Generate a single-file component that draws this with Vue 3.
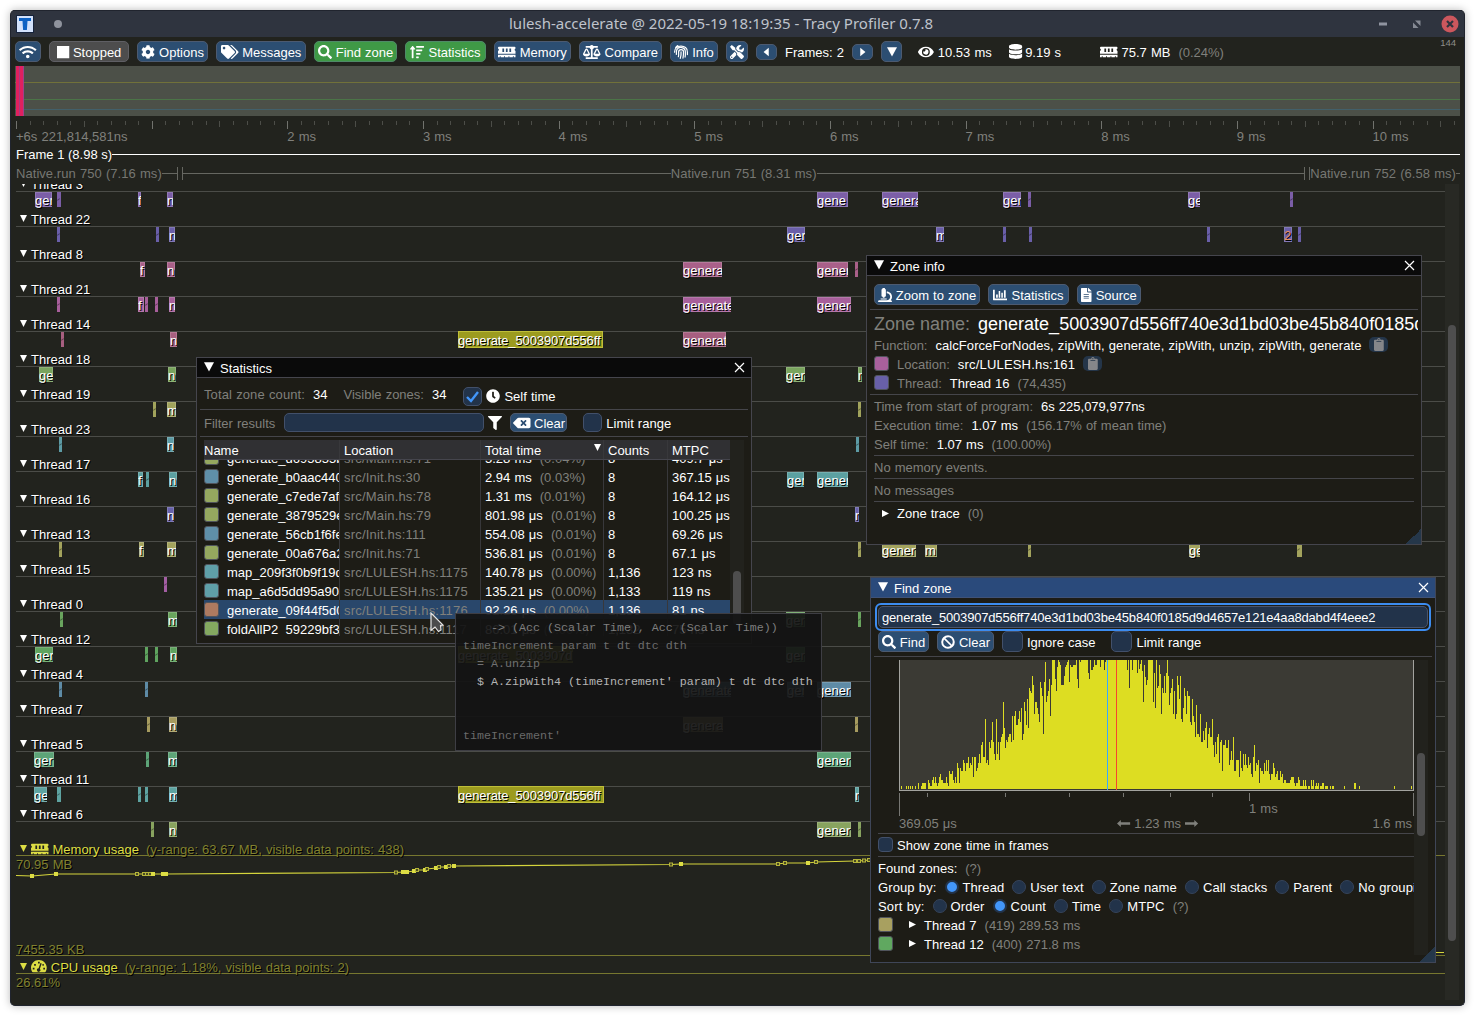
<script setup>
import { h } from 'vue'

const icons = {
  wifi: [640, 'M634.91 154.88C457.74-8.99 182.19-8.93 5.09 154.88c-6.66 6.16-6.79 16.59-.35 22.98l34.24 33.97c6.14 6.1 16.02 6.23 22.4.38 145.92-133.68 371.3-133.71 517.25 0 6.38 5.85 16.26 5.71 22.4-.38l34.24-33.97c6.43-6.39 6.3-16.82-.36-22.98zM320 352c-35.35 0-64 28.65-64 64s28.65 64 64 64 64-28.65 64-64-28.65-64-64-64zm202.67-83.59c-115.26-101.93-290.21-101.82-405.34 0-6.9 6.1-7.12 16.69-.57 23.15l34.44 33.99c6 5.92 15.66 6.32 22.05.8 83.95-72.57 209.74-72.41 293.49 0 6.39 5.52 16.05 5.13 22.05-.8l34.44-33.99c6.56-6.46 6.33-17.06-.56-23.15z'],
  stop: [448, 'M0 32h448v448H0z'],
  cog: [512, 'M487.4 315.7l-42.6-24.6c4.3-23.2 4.3-47 0-70.2l42.6-24.6c4.9-2.8 7.1-8.6 5.5-14-11.1-35.6-30-67.8-54.7-94.6-3.8-4.1-10-5.1-14.8-2.3L380.8 110c-17.9-15.4-38.5-27.3-60.8-35.1V25.8c0-5.6-3.9-10.5-9.4-11.7-36.7-8.2-74.3-7.8-109.2 0-5.5 1.2-9.4 6.1-9.4 11.7V75c-22.2 7.9-42.8 19.8-60.8 35.1L88.7 85.5c-4.9-2.8-11-1.9-14.8 2.3-24.7 26.7-43.6 58.9-54.7 94.6-1.7 5.4.6 11.2 5.5 14L67.3 221c-4.3 23.2-4.3 47 0 70.2l-42.6 24.6c-4.9 2.8-7.1 8.6-5.5 14 11.1 35.6 30 67.8 54.7 94.6 3.8 4.1 10 5.1 14.8 2.3l42.6-24.6c17.9 15.4 38.5 27.3 60.8 35.1v49.2c0 5.6 3.9 10.5 9.4 11.7 36.7 8.2 74.3 7.8 109.2 0 5.5-1.2 9.4-6.1 9.4-11.7v-49.2c22.2-7.9 42.8-19.8 60.8-35.1l42.6 24.6c4.9 2.8 11 1.9 14.8-2.3 24.7-26.7 43.6-58.9 54.7-94.6 1.5-5.5-.7-11.3-5.6-14.1zM256 336c-44.1 0-80-35.9-80-80s35.9-80 80-80 80 35.9 80 80-35.9 80-80 80z'],
  tags: [640, 'M497.941 225.941L286.059 14.059A48 48 0 0 0 252.118 0H48C21.49 0 0 21.49 0 48v204.118a48 48 0 0 0 14.059 33.941l211.882 211.882c18.744 18.745 49.136 18.746 67.882 0l204.118-204.118c18.745-18.745 18.745-49.137 0-67.882zM112 160c-26.51 0-48-21.49-48-48s21.49-48 48-48 48 21.49 48 48-21.49 48-48 48zm513.941 133.823L421.823 497.941c-18.745 18.745-49.137 18.745-67.882 0l-.36-.36L527.64 323.522c16.999-16.999 26.36-39.6 26.36-63.64s-9.362-46.641-26.36-63.64L331.397 0h48.721a48 48 0 0 1 33.941 14.059l211.882 211.882c18.745 18.745 18.745 49.137 0 67.882z'],
  search: [512, 'M505 442.7L405.3 343c-4.5-4.5-10.6-7-17-7H372c27.6-35.3 44-79.7 44-128C416 93.1 322.9 0 208 0S0 93.1 0 208s93.1 208 208 208c48.3 0 92.7-16.4 128-44v16.3c0 6.4 2.5 12.5 7 17l99.7 99.7c9.4 9.4 24.6 9.4 33.9 0l28.3-28.3c9.4-9.4 9.4-24.6.1-34zM208 336c-70.7 0-128-57.2-128-128 0-70.7 57.2-128 128-128 70.7 0 128 57.2 128 128 0 70.7-57.2 128-128 128z'],
  sort: [512, 'M16 160h48v304q0 16 16 16h32q16 0 16-16V160h48c14 0 21-17 11-27L107 37q-11-10-22 0L5 133c-10 10-3 27 11 27zM240 32h256q16 0 16 16v32q0 16-16 16H240q-16 0-16-16V48q0-16 16-16zM240 160h192q16 0 16 16v32q0 16-16 16H240q-16 0-16-16v-32q0-16 16-16zM240 288h128q16 0 16 16v32q0 16-16 16H240q-16 0-16-16v-32q0-16 16-16zM240 416h64q16 0 16 16v32q0 16-16 16h-64q-16 0-16-16v-32q0-16 16-16z'],
  memory: [640, 'M640 130.94V96c0-17.67-14.33-32-32-32H32C14.33 64 0 78.33 0 96v34.94c18.6 6.61 32 24.19 32 45.06s-13.4 38.45-32 45.06V320h640v-98.94c-18.6-6.61-32-24.19-32-45.06s13.4-38.45 32-45.06zM224 256h-64V128h64v128zm128 0h-64V128h64v128zm128 0h-64V128h64v128zM0 448h64v-26.67c0-8.84 7.16-16 16-16s16 7.16 16 16V448h128v-26.67c0-8.84 7.16-16 16-16s16 7.16 16 16V448h128v-26.67c0-8.84 7.16-16 16-16s16 7.16 16 16V448h128v-26.67c0-8.84 7.16-16 16-16s16 7.16 16 16V448h64v-96H0v96z'],
  scale: [640, 'M256 336h-.02c0-16.18 1.34-8.73-85.05-181.51-17.65-35.29-68.19-35.36-85.87 0C-2.06 328.75.02 320.33.02 336H0c0 44.18 57.31 80 128 80s128-35.82 128-80zM128 176l72 144H56l72-144zm511.98 160c0-16.18 1.34-8.73-85.05-181.51-17.65-35.29-68.19-35.36-85.87 0-87.12 174.26-85.04 165.84-85.04 181.51H384c0 44.18 57.31 80 128 80s128-35.82 128-80h-.02zM440 320l72-144 72 144H440zm88 128H352V153.25c23.51-10.29 41.16-31.48 46.39-57.25H528c8.84 0 16-7.16 16-16V48c0-8.84-7.16-16-16-16H383.64C369.04 12.68 346.09 0 320 0s-49.04 12.68-63.64 32H112c-8.84 0-16 7.16-16 16v32c0 8.84 7.16 16 16 16h129.61c5.23 25.76 22.87 46.96 46.39 57.25V448H112c-8.84 0-16 7.16-16 16v32c0 8.84 7.16 16 16 16h416c8.84 0 16-7.16 16-16v-32c0-8.84-7.16-16-16-16z'],
  finger: [512, 'M20 260c-18-290 490-300 470 0v90M85 340c10-60-10-110 20-170 70-120 310-110 310 80 4 60 2 130-10 190M160 430c20-70 8-120 8-180 8-110 178-110 180 0 2 90-4 150-20 230M258 250c6 90-4 170-28 240M60 90c20-30 50-55 80-70', 'stroke'],
  tools: [512, 'M501.1 395.7L384 278.6c-23.1-23.1-57.6-27.6-85.4-13.9L192 158.1V96L64 0 0 64l96 128h62.1l106.6 106.6c-13.6 27.8-9.2 62.3 13.9 85.4l117.1 117.1c14.6 14.6 38.2 14.6 52.7 0l52.7-52.7c14.5-14.6 14.5-38.2 0-52.7zM331.7 225c28.3 0 54.9 11 74.9 31l19.4 19.4c15.8-6.9 30.8-16.5 43.8-29.5 37.1-37.1 49.7-89.3 37.9-136.7-2.2-9-13.5-12.1-20.1-5.5l-74.4 74.4-67.9-11.3L334 98.9l74.4-74.4c6.6-6.6 3.4-17.9-5.7-20.2-47.4-11.7-99.6.9-136.6 37.9-28.5 28.5-41.9 66.1-41.2 103.6l82.1 82.1c8.1-1.9 16.5-2.9 24.7-2.9zm-103.9 82l-56.7-56.7L18.7 402.8c-25 25-25 65.5 0 90.5s65.5 25 90.5 0l123.6-123.6c-7.6-19.9-9.9-41.6-5-62.7zM64 472c-13.2 0-24-10.8-24-24 0-13.3 10.7-24 24-24s24 10.7 24 24c0 13.2-10.7 24-24 24z'],
  left: [256, 'M210 100v312L20 256z'],
  right: [256, 'M46 100v312l190-156z'],
  down: [320, 'M0 100h320L160 400z'],
  eye: [576, 'M572.52 241.4C518.29 135.59 410.93 64 288 64S57.68 135.64 3.48 241.41a32.35 32.35 0 0 0 0 29.19C57.71 376.41 165.07 448 288 448s230.32-71.64 284.52-177.41a32.35 32.35 0 0 0 0-29.19zM288 400a144 144 0 1 1 144-144 143.93 143.93 0 0 1-144 144zm0-240a95.31 95.31 0 0 0-25.31 3.79 47.85 47.85 0 0 1-66.9 66.9A95.78 95.78 0 1 0 288 160z'],
  db: [448, 'M448 73.143v45.714C448 159.143 347.667 192 224 192S0 159.143 0 118.857V73.143C0 32.857 100.333 0 224 0s224 32.857 224 73.143zM448 176v102.857C448 319.143 347.667 352 224 352S0 319.143 0 278.857V176c48.125 33.143 136.208 48.572 224 48.572S399.874 209.143 448 176zm0 160v102.857C448 479.143 347.667 512 224 512S0 479.143 0 438.857V336c48.125 33.143 136.208 48.572 224 48.572S399.874 369.143 448 336z'],
  clock: [512, 'M256 8C119 8 8 119 8 256s111 248 248 248 248-111 248-248S393 8 256 8zm92.49 313l-20 25a16 16 0 0 1-22.49 2.5l-67-49.72a40 40 0 0 1-15-31.23V112a16 16 0 0 1 16-16h32a16 16 0 0 1 16 16v144l58 42.5a16 16 0 0 1 2.49 22.5z'],
  filter: [512, 'M487.976 0H24.028C2.71 0-8.047 25.866 7.058 40.971L192 225.941V432c0 7.831 3.821 15.17 10.237 19.662l80 55.98C298.02 518.69 320 507.493 320 487.98V225.941l184.947-184.97C520.021 25.896 509.338 0 487.976 0z'],
  backspace: [640, 'M576 64H205.26A63.97 63.97 0 0 0 160 82.75L9.37 233.37c-12.5 12.5-12.5 32.76 0 45.25L160 429.25c12 12 28.28 18.75 45.25 18.75H576c35.35 0 64-28.65 64-64V128c0-35.35-28.65-64-64-64zm-84.69 254.06c6.25 6.25 6.25 16.38 0 22.63l-22.62 22.62c-6.25 6.25-16.38 6.25-22.63 0L384 301.25l-62.06 62.06c-6.25 6.25-16.38 6.25-22.63 0l-22.62-22.62c-6.25-6.25-6.25-16.38 0-22.63L338.75 256l-62.06-62.06c-6.25-6.25-6.25-16.38 0-22.63l22.62-22.62c6.25-6.25 16.38-6.25 22.63 0L384 210.75l62.06-62.06c6.25-6.25 16.38-6.25 22.63 0l22.62 22.62c6.25 6.25 6.25 16.38 0 22.63L429.25 256l62.06 62.06z'],
  ban: [512, 'M256 8a248 248 0 1 0 0 496 248 248 0 0 0 0-496zM397 352L160 115c66-50 161-42 222 15 60 61 65 156 15 222zM115 160l237 237c-66 50-161 42-222-15-60-61-65-156-15-222z'],
  microscope: [512, 'M160 320h12v16c0 8.84 7.16 16 16 16h40c8.84 0 16-7.16 16-16v-16h12c17.67 0 32-14.33 32-32V64c0-17.67-14.33-32-32-32V16c0-8.84-7.16-16-16-16h-64c-8.84 0-16 7.16-16 16v16c-17.67 0-32 14.33-32 32v224c0 17.67 14.33 32 32 32zm304 128h-1.29C493.24 413.99 512 369.2 512 320c0-105.88-86.12-192-192-192v64c70.58 0 128 57.42 128 128s-57.42 128-128 128H48c-26.51 0-48 21.49-48 48 0 8.84 7.16 16 16 16h480c8.84 0 16-7.16 16-16 0-26.51-21.49-48-48-48zm-360-32h208c4.42 0 8-3.58 8-8v-16c0-4.42-3.58-8-8-8H104c-4.42 0-8 3.58-8 8v16c0 4.42 3.58 8 8 8z'],
  chart: [512, 'M0 64h64v320h448v64H16q-16 0-16-16zM112 240h64v112h-64zM208 112h56v240h-56zM304 176h56v176h-56zM400 80h64v272h-64z'],
  file: [384, 'M224 136V0H24C10.7 0 0 10.7 0 24v464c0 13.3 10.7 24 24 24h336c13.3 0 24-10.7 24-24V160H248c-13.2 0-24-10.8-24-24zm64 236c0 6.6-5.4 12-12 12H108c-6.6 0-12-5.4-12-12v-8c0-6.6 5.4-12 12-12h168c6.6 0 12 5.4 12 12v8zm0-64c0 6.6-5.4 12-12 12H108c-6.6 0-12-5.4-12-12v-8c0-6.6 5.4-12 12-12h168c6.6 0 12 5.4 12 12v8zm0-72v8c0 6.6-5.4 12-12 12H108c-6.6 0-12-5.4-12-12v-8c0-6.6 5.4-12 12-12h168c6.6 0 12 5.4 12 12zm96-114.1v6.1H256V0h6.1c6.4 0 12.5 2.5 17 7l97.9 98c4.5 4.5 7 10.6 7 16.9z'],
  clipboard: [384, 'M384 112v352c0 26.51-21.49 48-48 48H48c-26.51 0-48-21.49-48-48V112c0-26.51 21.49-48 48-48h80c0-35.29 28.71-64 64-64s64 28.71 64 64h80c26.51 0 48 21.49 48 48zM192 40c-13.255 0-24 10.745-24 24s10.745 24 24 24 24-10.745 24-24-10.745-24-24-24m96 114v-20a6 6 0 0 0-6-6H102a6 6 0 0 0-6 6v20a6 6 0 0 0 6 6h180a6 6 0 0 0 6-6z'],
  gauge: [576, 'M288 32C129 32 0 161 0 320c0 53 14 102 39 145q9 15 27 15h444q18 0 27-15c25-43 39-92 39-145C576 161 447 32 288 32zm-32 64h64v64h-64zM64 320h64v64H64zm50-140h64v64h-64zM448 320h64v64h-64zm10-140h-40v64h50v-64zM346 150l46 14-68 190a64 64 0 1 1-46-16z'],
  arrowL: [448, 'M0 256l130-120v80h318v80H130v80z'],
  arrowR: [448, 'M448 256L318 136v80H0v80h318v80z'],
}

const Icon = (p) => {
  const [w, d, mode] = icons[p.n]
  const s = p.s || 14
  return h('svg', { width: (w / 512) * s, height: s, viewBox: `0 0 ${w} 512`, style: { flex: 'none', overflow: 'visible' } }, [
    h('path', mode
      ? { d, fill: 'none', stroke: 'currentColor', 'stroke-width': 44, 'stroke-linecap': 'round' }
      : { d, fill: 'currentColor', 'fill-rule': 'evenodd' }),
  ])
}
Icon.props = ['n', 's']

const toolbar = [
  { icon: 'wifi', w: 26 },
  { icon: 'stop', text: 'Stopped', w: 80, kind: 'grey' },
  { icon: 'cog', text: 'Options', w: 71 },
  { icon: 'tags', text: 'Messages', w: 90 },
  { icon: 'search', text: 'Find zone', w: 83, kind: 'green' },
  { icon: 'sort', text: 'Statistics', w: 81, kind: 'green' },
  { icon: 'memory', text: 'Memory', w: 77 },
  { icon: 'scale', text: 'Compare', w: 83 },
  { icon: 'finger', text: 'Info', w: 48 },
  { icon: 'tools', w: 22 },
]

const ticks = Array.from({ length: 107 }, (_, i) => ({
  x: Math.round(i * 13.565),
  len: i % 10 === 0 ? 8 : i % 5 === 0 ? 6 : 4,
  c: i % 10 === 0 ? '#71726d' : '#4c4d48',
}))
const marks = [2, 3, 4, 5, 6, 7, 8, 9, 10].map((n) => ({ n, x: n * 135.65 }))

const Y = '#9c9b1f'
// zones: [left, right, label, colour override, extra class]
const threads = [
  { n: 3, c: '#7b5ea7', z: [[35, 52, 'gen'], [57, 61], [138, 141, 'f'], [167, 173, 'n'], [817, 848, 'gene'], [882, 918, 'genera'], [1003, 1021, 'gen'], [1028, 1031], [1188, 1200, 'gen'], [1290, 1293]] },
  { n: 22, c: '#6a5fa9', z: [[57, 60], [156, 159], [169, 175, 'n'], [787, 805, 'ger'], [936, 944, 'm'], [1003, 1006], [1029, 1032], [1207, 1210], [1284, 1292, '2', '#6a5fa9', 'warn'], [1298, 1301]] },
  { n: 8, c: '#a96089', z: [[140, 145, 'f'], [167, 175, 'n'], [683, 722, 'genera'], [817, 848, 'gener'], [855, 858]] },
  { n: 21, c: '#a75f9b', z: [[57, 60], [138, 144, 'f'], [145, 148], [155, 158], [169, 175, 'n'], [683, 731, 'generate'], [817, 851, 'gener']] },
  { n: 14, c: '#a75f80', z: [[61, 64], [170, 177, 'n'], [458, 603, 'generate_5003907d556ff', Y], [683, 726, 'generat']] },
  { n: 18, c: '#79a45e', z: [[39, 53, 'ge'], [168, 176, 'n'], [786, 805, 'ger'], [858, 862, 'n']] },
  { n: 19, c: '#a1a35c', z: [[153, 156], [167, 176, 'm'], [858, 861]] },
  { n: 23, c: '#5d9ba5', z: [[59, 62], [167, 174, 'n'], [856, 859]] },
  { n: 17, c: '#5ba0a1', z: [[138, 143, 'f'], [146, 149], [169, 177, 'n'], [787, 804, 'gen'], [817, 848, 'gener']] },
  { n: 16, c: '#6862ab', z: [[167, 174, 'n'], [855, 859, 'n']] },
  { n: 13, c: '#a3a35d', z: [[59, 62], [139, 144, 'f'], [167, 176, 'm'], [858, 861], [882, 916, 'gener'], [925, 937, 'm'], [1028, 1031], [1189, 1200, 'gen'], [1297, 1302]] },
  { n: 15, c: '#a35ea3', z: [[164, 167]] },
  { n: 0, c: '#69a45e', z: [[60, 63], [168, 177, 'm'], [786, 805, 'ger'], [858, 861]] },
  { n: 12, c: '#5fa35f', z: [[35, 53, 'ger'], [145, 148], [155, 158], [170, 177, 'n'], [458, 573, 'generate_5003907d', Y], [786, 805, 'ger']] },
  { n: 4, c: '#5e8ba6', z: [[59, 62], [145, 148], [683, 731, 'generate'], [787, 804, 'ger'], [817, 851, 'gener']] },
  { n: 7, c: '#a69b5f', z: [[147, 150], [169, 177, 'n'], [683, 723, 'genera'], [855, 858]] },
  { n: 5, c: '#5da478', z: [[34, 54, 'ger'], [146, 149], [168, 177, 'm'], [817, 851, 'gener']] },
  { n: 11, c: '#5ea3a1', z: [[34, 47, 'ge'], [57, 61], [138, 141], [145, 148], [169, 177, 'm'], [458, 604, 'generate_5003907d556ff', Y], [855, 859, 'n']] },
  { n: 6, c: '#88a35f', z: [[151, 154], [169, 177, 'n'], [817, 851, 'gener'], [858, 861]] },
]

// memory plot samples in plot coordinates: [x, y, hollow]
const mem = [[16, 20], [40, 18], [121, 18, 1], [128, 18, 1], [131, 18, 1], [134, 18, 1], [137, 18], [147, 18], [150, 18], [380, 16.5, 1], [387, 16], [391, 16], [398, 15], [401, 14, 1], [409, 14], [411, 13, 1], [420, 12], [423, 11, 1], [430, 11], [433, 10, 1], [438, 10], [655, 8.5, 1], [665, 8], [762, 8, 1], [769, 7, 1], [792, 7], [800, 6, 1], [839, 5, 1], [843, 5, 1], [848, 4.5, 1], [853, 4, 1]]
const memLine = 'M0 19.5 ' + mem.map(([x, y]) => `L${x} ${y}`).join(' ')

const stats = [
  ['#95a85f', 'generate_d695855ba', 'src/Main.hs:71', '5.28 ms', '(0.04%)', '8', '409.7 μs'],
  ['#5f8fa8', 'generate_b0aac440a', 'src/Init.hs:30', '2.94 ms', '(0.03%)', '8', '367.15 μs'],
  ['#95a85f', 'generate_c7ede7af3', 'src/Main.hs:78', '1.31 ms', '(0.01%)', '8', '164.12 μs'],
  ['#95a85f', 'generate_3879529e1', 'src/Main.hs:79', '801.98 μs', '(0.01%)', '8', '100.25 μs'],
  ['#5f8fa8', 'generate_56cb1f6fe', 'src/Init.hs:111', '554.08 μs', '(0.01%)', '8', '69.26 μs'],
  ['#95a85f', 'generate_00a676a2c', 'src/Init.hs:71', '536.81 μs', '(0.01%)', '8', '67.1 μs'],
  ['#5f9fa8', 'map_209f3f0b9f19dc', 'src/LULESH.hs:1175', '140.78 μs', '(0.00%)', '1,136', '123 ns'],
  ['#5f9fa8', 'map_a6d5dd95a9023', 'src/LULESH.hs:1175', '135.21 μs', '(0.00%)', '1,133', '119 ns'],
  ['#ad7a60', 'generate_09f44f5d0c', 'src/LULESH.hs:1176', '92.26 μs', '(0.00%)', '1,136', '81 ns'],
  ['#84a860', 'foldAllP2_59229bf3e', 'src/LULESH.hs:1117', '86.01 μs', '(0.00%)', '1,132', '75 ns'],
]

const code = [
  ['    -> (Acc (Scalar Time), Acc (Scalar Time))', '#7f7f7f'],
  ['timeIncrement param t dt dtc dth', '#6c6c6c'],
  ['  = A.unzip', '#707070'],
  ["  $ A.zipWith4 (timeIncrement' param) t dt dtc dth", '#b4b4b4'],
  ['', '#777'],
  ['', '#777'],
  ["timeIncrement'", '#6a6a6a'],
]

// histogram bar heights, one per pixel column, keyed by first column
const barRuns = {
  1: '0 3 0 0 0 0 3 0 3 0 3 0 3 0 0 3 0 0 6 0 0 3 6 6 6 6 0 0 9 6 3 3 9 12 6 12 6 3 6 12 15 9 9 6 6 6 12 6 3 18 15 15 18 9 6 12 6 26 21 6 21 18 18 29 26 18 26 26 32 21 26 24 32 12 32 32 18 21 26 35 26 44 47 32 32',
  86: '70 26 29 24 47 41 49 67 47 35 29 70 35 47 29 47 52 55 87 61 41 49 47 52 55 55 47 73 49 73 78 64 64 70 78 67 81 49 55 87 78 64 90 61 101 98 96 113 104 75 87 87 81 75 67 107 101 93 55 107 127 87 93 98 110',
  151: '73 104 130 130 130 110 98 122 130 127 124 104 104 104 113 122 124 127 130 107 124 122 122 124 124 124 130 110 101 130 127 130 130 130 130 130 130 130 116 110 130 119 119 122 130 124 124 130 130 130 122 130 130 130 119 127',
  207: Array(21).fill(130).join(' '),
  228: '119 130 101 130 130 119 130 130 130 130 116 130 120 125 130 118 87 124 112 104 109 130 130 130 130 130 87 116 81 130 101 103 124 115 75 101 96 113',
  266: '96 116 130 113 84 96 101 110 75 98 70 75 113 104 90 113 70 67 81 101 93 75 98 93 93 67 64 90 73 67 52 84 55 55 52 75 47 47 58 49 61 67 41 55 61 52 52 70 44 32 47 35 52 55 26 47 49 18 44 44 49 41 41 49 24 29 38 29',
  334: '52 18 18 29 29 29 12 38 21 18 35 24 35 24 21 32 24 26 15 12 32 44 18 26 24 29 6 21 18 18 15 26 18 29 18 29 15 9 15 15 26 21 12 15 18 9 9 18 12 15 6 9 9 6 6 6 6 9 12 12 12 6 3 6 6 12 9 3 3 3 9 3 9 3 0 3 3 0 9 3 9 0 3 6 3 6 0 3 3 6 6 0 3 3 3 0 0 3 0 3 3',
  445: '3', 455: '6 6', 460: '3', 495: '3', 512: '3',
}
const barPath = Object.entries(barRuns).map(([start, run]) =>
  run.split(' ').map((v, i) => (+v ? `M${+start + i} 129v-${Math.min(v, 129)}h1v${Math.min(v, 129)}z` : '')).join('')).join('')
const logTicks = [28, 106, 170, 224, 271, 313]
const groups = ['Thread', 'User text', 'Zone name', 'Call stacks', 'Parent', 'No grouping']
const sorts = ['Order', 'Count', 'Time', 'MTPC']
</script>

<template>
  <div class="page">
    <div class="frame">
      <header class="titlebar">
        <svg class="logo" width="18" height="18" viewBox="0 0 18 18">
          <rect width="18" height="18" fill="#16233c" /><rect x="1" y="1" width="16" height="16" fill="#d3e2fb" />
          <path d="M3 3h12v3h-3.500l-.6 9H7.100L6.500 6H3z" fill="#0e62c4" />
        </svg>
        <i class="pin"></i>
        <span class="title">lulesh-accelerate @ 2022-05-19 18:19:35 - Tracy Profiler 0.7.8</span>
        <svg class="controls" width="78" height="18" viewBox="0 0 78 18">
          <path d="M0 9h8" stroke="#9094a0" stroke-width="3" />
          <path d="M36 5.500h5.500V11zM34 7.500V13h5.500z" fill="#868a94" />
          <circle cx="71" cy="9" r="8.500" fill="#cc575d" /><path d="M68 6l6 6m0-6l-6 6" stroke="#2f343f" stroke-width="2.200" />
        </svg>
      </header>

      <div class="toolbar">
        <button v-for="b in toolbar" :key="b.icon" class="btn" :class="b.kind" :style="{ width: b.w + 'px' }">
          <Icon :n="b.icon" /><span v-if="b.text">{{ b.text }}</span>
        </button>
        <button class="btn small"><Icon n="left" :s="14" /></button>
        <span class="frames">Frames: 2</span>
        <button class="btn small"><Icon n="right" :s="14" /></button>
        <button class="btn drop"><Icon n="down" :s="16" /></button>
        <span class="stat view"><Icon n="eye" />10.53 ms</span>
        <span class="stat span"><Icon n="db" :s="15" />9.19 s</span>
        <span class="stat ram"><Icon n="memory" />75.7 MB <em>(0.24%)</em></span>
        <small class="fps">144</small>
      </div>

      <div class="overview"><i class="l1"></i><i class="l2"></i><i class="l3"></i><b></b></div>

      <div class="ruler">
        <svg width="1444" height="10" shape-rendering="crispEdges">
          <rect v-for="(t, i) in ticks" :key="i" :x="t.x" y="0" width="1" :height="t.len" :fill="t.c" />
        </svg>
        <span>+6s 221,814,581ns</span>
        <span v-for="m in marks" :key="m.n" class="mark" :style="{ left: m.x + 'px' }">{{ m.n }} ms</span>
      </div>
      <div class="frow bright"><span>Frame 1 (8.98 s)</span><i class="grow"></i></div>
      <div class="frow runs"><span>Native.run 750 (7.16 ms)</span><i class="w15"></i><u></u><u class="u2"></u><i class="w488"></i><span>Native.run 751 (8.31 ms)</span><i class="grow"></i><u></u><u class="u2"></u><span>Native.run 752 (6.58 ms)</span><i class="w4"></i></div>

      <div class="scroll">
        <div class="lanes">
          <section v-for="t in threads" :key="t.n" class="thread">
            <h4><svg class="tri" width="7" height="7"><path d="M0 0h7L3.500 7z" fill="#fff" /></svg>Thread {{ t.n }}</h4>
            <div class="lane">
              <span
                v-for="(z, i) in t.z" :key="i" class="zone"
                :class="[z[4], { thin: !z[2], wide: z[3] && !z[4] }]"
                :style="{ left: z[0] - 16 + 'px', width: z[1] - z[0] + 'px', background: z[3] || t.c }"
              ><span v-if="z[2]">{{ z[2] }}</span></span>
            </div>
          </section>
          <section class="plot mem">
            <h4><svg class="tri" width="7" height="7"><path d="M0 0h7L3.500 7z" fill="#dddd44" /></svg><Icon n="memory" :s="14" /><span class="pn">Memory usage</span><em>(y-range: 63.67 MB, visible data points: 438)</em></h4>
            <div class="area">
              <svg width="1429" height="99">
                <path :d="memLine" fill="none" stroke="#d5d53c" stroke-width="1.200" />
                <path d="M1380 96.500h48" stroke="#d5d53c" />
                <rect v-for="(m, i) in mem" :key="i" :x="m[0] - (m[2] ? 1.5 : 2)" :y="m[1] - (m[2] ? 1.5 : 2)" :width="m[2] ? 3 : 4" :height="m[2] ? 3 : 4" :fill="m[2] ? '#4a4a22' : '#dddd44'" :stroke="m[2] ? '#b5b53a' : 'none'" />
              </svg>
              <span>70.95 MB</span><span class="lo">7455.35 KB</span>
            </div>
          </section>
          <section class="plot">
            <h4><svg class="tri" width="7" height="7"><path d="M0 0h7L3.500 7z" fill="#dddd44" /></svg><Icon n="gauge" :s="14" /><span class="pn">CPU usage</span><em>(y-range: 1.18%, visible data points: 2)</em></h4>
            <div class="area"><span>26.61%</span></div>
          </section>
        </div>
        <div class="vbar"><i></i></div>
      </div>
    </div>

    <!-- Zone info -->
    <div class="win info">
      <div class="cap"><Icon n="down" :s="16" /><span>Zone info</span><svg class="x" width="9" height="9"><path d="M0 0l9 9M9 0l-9 9" stroke="#fff" stroke-width="1.200" /></svg></div>
      <div class="body">
        <div class="brow">
          <button class="btn b1"><Icon n="microscope" />Zoom to zone</button>
          <button class="btn b2"><Icon n="chart" />Statistics</button>
          <button class="btn b3"><Icon n="file" />Source</button>
        </div>
        <hr class="out first" />
        <div class="big"><em>Zone name:</em><span>generate_5003907d556ff740e3d1bd03be45b840f0185d9d4657</span></div>
        <div class="row"><em>Function:</em><span class="fn">calcForceForNodes, zipWith, generate, zipWith, unzip, zipWith, generate</span><b class="clip"><Icon n="clipboard" :s="13" /></b></div>
        <div class="row"><i class="sw loc"></i><em>Location:</em><span class="ls">src/LULESH.hs:161</span><b class="clip"><Icon n="clipboard" :s="13" /></b></div>
        <div class="row"><i class="sw thr"></i><em>Thread:</em><span>Thread 16</span><em>(74,435)</em></div>
        <hr class="out" />
        <div class="row"><em>Time from start of program:</em><span>6s 225,079,977ns</span></div>
        <div class="row"><em>Execution time:</em><span>1.07 ms</span><em>(156.17% of mean time)</em></div>
        <div class="row"><em>Self time:</em><span>1.07 ms</span><em>(100.00%)</em></div>
        <hr />
        <div class="row"><em>No memory events.</em></div>
        <hr />
        <div class="row"><em>No messages</em></div>
        <hr />
        <div class="row trace"><svg width="7" height="8"><path d="M0 0v7l7-3.500z" fill="#fff" /></svg><span>Zone trace</span><em>(0)</em></div>
      </div>
      <i class="grip"></i>
    </div>

    <!-- Statistics -->
    <div class="win stats">
      <div class="cap"><Icon n="down" :s="16" /><span>Statistics</span><svg class="x" width="9" height="9"><path d="M0 0l9 9M9 0l-9 9" stroke="#fff" stroke-width="1.200" /></svg></div>
      <div class="body">
        <div class="srow"><em class="tz">Total zone count:</em><span>34</span><em class="ml">Visible zones:</em><span>34</span>
          <i class="chk ck"><svg width="13" height="13" viewBox="0 0 13 13"><path d="M1 7l4 4 7-9" fill="none" stroke="#4296fa" stroke-width="2.400" /></svg></i>
          <Icon n="clock" class="ck2" /><span class="self">Self time</span></div>
        <hr class="out h1" />
        <div class="srow filt"><em>Filter results</em><i class="inp"></i><Icon n="filter" class="fi" /><button class="btn b4"><Icon n="backspace" />Clear</button><i class="chk lr"></i><span class="lt">Limit range</span></div>
        <hr class="out h2" />
        <div class="tblwrap">
          <div class="tbl">
            <div class="tr th"><span>Name</span><span>Location</span><span>Total time<svg width="7" height="7"><path d="M0 0h7L3.500 7z" fill="#fff" /></svg></span><span>Counts</span><span>MTPC</span></div>
            <div class="tb">
              <div v-for="(r, i) in stats" :key="i" class="tr" :class="{ sel: i === 8 }">
                <span><i class="sw" :style="{ background: r[0] }"></i>{{ r[1] }}</span><span><em class="ls">{{ r[2] }}</em></span><span>{{ r[3] }}<em class="pc">{{ r[4] }}</em></span><span>{{ r[5] }}</span><span>{{ r[6] }}</span>
              </div>
            </div>
          </div>
          <div class="sbar"><i></i></div>
        </div>
      </div>
    </div>

    <!-- Find zone -->
    <div class="win find">
      <div class="cap"><Icon n="down" :s="16" /><span>Find zone</span><svg class="x" width="9" height="9"><path d="M0 0l9 9M9 0l-9 9" stroke="#fff" stroke-width="1.200" /></svg></div>
      <div class="body">
        <div class="focus"><div>generate_5003907d556ff740e3d1bd03be45b840f0185d9d4657e121e4aa8dabd4f4eee2</div></div>
        <div class="brow fr">
          <button class="btn f1"><Icon n="search" />Find</button><button class="btn f2"><Icon n="ban" />Clear</button>
          <i class="chk big1"></i><span class="ic">Ignore case</span><i class="chk big1"></i><span>Limit range</span>
        </div>
        <hr class="out h2" />
        <div class="fwrap">
          <div class="fmain">
            <svg class="hist" width="515" height="160" shape-rendering="crispEdges">
              <rect width="515" height="130" fill="#3b3a34" /><path :d="barPath" fill="#dddd22" />
              <path d="M.5 0v131M514.500 0v131M0 130.500h515" stroke="#a3a39f" />
              <rect x="208" width="1" height="130" fill="#38aaff" /><rect x="217" width="1" height="130" fill="#f8452e" />
              <path d="M.5 133v23M514.500 133v23M350.500 133v8" stroke="#777773" />
              <rect v-for="t in logTicks" :key="t" :x="t" y="133" width="1" height="4" fill="#777773" />
            </svg>
            <div class="axis"><span>1 ms</span></div>
            <div class="axis2"><em>369.05 μs</em><em class="mid"><Icon n="arrowL" :s="15" />1.23 ms<Icon n="arrowR" :s="15" /></em><em>1.6 ms</em></div>
            <hr />
            <div class="row szf"><i class="chk sm"></i><span>Show zone time in frames</span></div>
            <hr class="tight" />
            <div class="row"><span>Found zones:</span><em>(?)</em></div>
            <div class="row opt"><span>Group by:</span><template v-for="(g, i) in groups" :key="g"><i class="radio" :class="{ on: i === 0 }"></i><span>{{ g }}</span></template></div>
            <div class="row opt sorts"><span>Sort by:</span><template v-for="(g, i) in sorts" :key="g"><i class="radio" :class="{ on: i === 1 }"></i><span>{{ g }}</span></template><em>(?)</em></div>
            <div class="row tree"><i class="sw t7"></i><svg width="7" height="8"><path d="M0 0v7l7-3.500z" fill="#fff" /></svg><span>Thread 7</span><em>(419) 289.53 ms</em></div>
            <div class="row tree"><i class="sw t12"></i><svg width="7" height="8"><path d="M0 0v7l7-3.500z" fill="#fff" /></svg><span>Thread 12</span><em>(400) 271.8 ms</em></div>
          </div>
          <div class="fbar"><i></i></div>
        </div>
      </div>
      <i class="grip"></i>
    </div>

    <div class="tip"><pre v-for="(l, i) in code" :key="i" :style="{ color: l[1] }">{{ l[0] }}</pre></div>
    <svg class="cursor" width="14" height="21" viewBox="0 0 14 21"><path d="M1 1v17.500l4-3.500 3.500 4.500 2.500-1.500-.5-4.500 2.500-.5z" fill="#4c4c4c" stroke="#e6e6e6" stroke-width="1.200" /></svg>
  </div>
</template>

<style>
body { background: #fff; }
</style>

<style scoped>
* { box-sizing: border-box; }
.page { position: relative; width: 1475px; height: 1016px; padding: 10px; overflow: hidden; background: #fff; font: 13px/15px "Liberation Sans", Arial, sans-serif; word-spacing: .5px; color: #fff; white-space: nowrap; }
em { font-style: normal; color: #80807c; }
i { display: block; flex: none; }
.frame { width: 1455px; height: 996px; background: #22231e; border: 1px solid #20242e; border-top: 0; border-radius: 5px; box-shadow: 0 0 9px rgba(0, 0, 0, .28); display: flex; flex-direction: column; overflow: hidden; }
.titlebar { flex: none; height: 27px; background: #2f343f; border-top: 1px solid #20242e; display: flex; align-items: center; padding-left: 5px; }
.pin { width: 8px; height: 8px; border-radius: 50%; background: #8f939d; margin: 0 0 0 20px; }
.title { margin: -2px 0 0 447px; font: 15px/20px "Noto Sans", sans-serif; word-spacing: 0; color: #bfc3cc; width: 426px; }
.controls { margin-left: 444px; overflow: visible; }
.toolbar { flex: none; display: flex; align-items: center; height: 29px; padding: 0 0 0 4px; gap: 8px; }
.btn { font: inherit; word-spacing: inherit; color: #fff; border: 1px solid #4c5a70; background: #2c4e72; border-radius: 5px; height: 21px; padding: 2px 0 0; display: flex; align-items: center; justify-content: center; gap: 4px; flex: none; }
.btn svg { margin-top: -2px; }
.grey { background: #4d4d4d; border-color: #5f5f64; }
.green { background: #3f9946; border-color: #4f8a68; }
.small { width: 21px; height: 16px; }
.frames { width: 59px; margin-top: 2px; }
.drop { width: 21px; }
.stat { display: flex; align-items: center; gap: 4px; margin-top: 2px; }
.stat svg { margin-top: -2px; }
.view { width: 83px; margin-left: 8px; }
.span { width: 83px; gap: 3px; }
.ram { gap: 4px; }
.stat em { margin-left: 4px; }
.fps { margin-left: auto; align-self: flex-start; font-size: 9.500px; line-height: 10px; margin: 1px 8px 0 auto; color: #8d8e8a; }
.overview { flex: none; height: 50px; margin: 0 4px; background: #4c5048; position: relative; }
.overview i { position: absolute; left: 0; right: 0; height: 1px; }
.l1 { top: 16px; background: #71713a; } .l2 { top: 33px; background: #4b7447; } .l3 { top: 43px; background: #42606a; }
.overview b { position: absolute; left: 1px; top: 0; width: 8px; height: 50px; background: linear-gradient(90deg, #e0205f 3px, #a83a80 3px 4px, #e0205f 4px 7px, #a0408a 7px); }
.ruler { flex: none; position: relative; height: 28px; margin: 5px 0 0 5px; color: #80807c; }
.ruler svg { display: block; margin-bottom: -2px; }
.mark { position: absolute; top: 8px; }
.frow { flex: none; display: flex; align-items: center; height: 19px; margin: 0 4px 0 5px; color: #767773; }
.runs { letter-spacing: .050px; }
.frow.bright { color: #fff; margin-top: -4px; word-spacing: 0; }
.frow i { height: 1px; background: #666761; }
.frow.bright i { background: #fff; }
.grow { flex: 1 1 0; }
.w15 { width: 15px; } .w488 { flex: 0 0 488px; } .w4 { width: 4px; }
.frow u { flex: none; width: 1px; height: 13px; background: #666761; margin-right: 4px; }
.frow .u2 { margin: 0; }
.scroll { flex: none; height: 816px; margin: 1px 5px 0; display: flex; position: relative; overflow: hidden; }
.lanes { width: 1429px; margin-top: -8px; height: 830px; }
.vbar { width: 14px; background: #282924; }
.vbar i { width: 8px; height: 616px; margin: 141px 3px 0; background: #4e4e4e; border-radius: 4px; }
.thread { height: 35px; word-spacing: 0; }
h4 { margin: 0; height: 16px; padding: 2px 0 0 4px; display: flex; align-items: center; font: inherit; border-bottom: 1px solid #4b4c48; text-shadow: 1px 1px #000; }
.tri { margin: -2px 4px 0 0; flex: none; }
.lane { position: relative; height: 19px; }
.zone { position: absolute; top: 0; height: 15px; overflow-x: clip; overflow-y: visible; box-shadow: inset 0 0 0 1px rgba(255, 255, 255, .16); text-shadow: 1px 1px #000; line-height: 17px; }
.thin { box-shadow: none; }
.thin::after { content: ""; position: absolute; left: 0; top: 7px; width: 3px; height: 1px; background: rgba(0, 0, 0, .4); transform: rotate(-35deg); }
.wide { box-shadow: inset 0 0 0 1px #bfbf38; top: -1px; height: 17px; line-height: 19px; letter-spacing: -.120px; }
.warn { color: #e89060; }
.plot { color: #dddd44; }
.plot h4, .plot .area { border-bottom: 1px solid #77772f; }
.plot h4 { height: 15px; padding-top: 3px; }
.plot h4 > svg:nth-child(2) { margin-top: -2px; }
.plot em { color: #81812f; }
.pn { margin: 0 7px 0 4px; }
.area { height: 100px; position: relative; display: flex; flex-direction: column; justify-content: space-between; color: #81812f; text-shadow: 1px 1px #000; padding: 1px 0 0; }
.area .lo { margin-bottom: -2px; }
.area svg { position: absolute; left: 0; top: 0; }
.plot:last-child h4 { height: 18px; padding-top: 5px; }
.plot:last-child .area { border: 0; }
.win { position: absolute; background: #1d1c16; border: 1px solid #45454d; display: flex; flex-direction: column; }
.cap { flex: none; height: 20px; background: #0a0a0a; border-bottom: 1px solid #45454d; display: flex; align-items: center; padding: 0 7px; gap: 6px; }
.cap > svg:first-child { margin-top: -1px; }
.cap span { padding-top: 2px; }
.cap .x { margin-left: auto; overflow: visible; margin-top: -1px; }
.body { padding: 0 7px; min-height: 0; }
hr { border: 0; height: 1px; background: #45454a; margin: 1px 0 2px; }
hr.out { margin-left: -4px; margin-right: -4px; }
hr.first { margin-top: 4px; margin-bottom: 3px; }
hr.h1 { margin-top: 5px; margin-bottom: 0; }
hr.h2 { margin-top: 4px; margin-bottom: 0; }
.brow { display: flex; gap: 8px; align-items: center; }
.grip { position: absolute; right: 0; bottom: 0; width: 15px; height: 15px; background: linear-gradient(135deg, transparent 50%, #25374a 50%); }
.sw { width: 15px; height: 15px; border-radius: 3px; border: 1px solid #50545c; }
.row .sw { margin-top: -2px; }
.loc { background: #a8609c; } .thr { background: #6860a8; } .t7 { background: #a8a060; } .t12 { background: #60a860; }
.info { left: 866px; top: 255px; width: 556px; height: 290px; }
.info .brow { margin-top: 8px; }
.b1 { width: 106px; } .b2 { width: 81px; } .b3 { width: 64px; }
.big { font-size: 18px; line-height: 23px; height: 23px; display: flex; gap: 8px; overflow: hidden; margin-right: -4px; word-spacing: 0; }
.row { display: flex; gap: 8px; height: 19px; align-items: center; }
.fn { letter-spacing: .065px; }
.ls { letter-spacing: .190px; }
.clip { width: 19px; height: 15px; background: #243549; border-radius: 5px; color: #85868a; display: flex; justify-content: center; align-items: center; margin-top: -2px; }
.trace { padding-left: 8px; }
.stats { left: 196px; top: 357px; width: 556px; height: 287px; }
.srow { display: flex; align-items: center; height: 19px; gap: 8px; margin-top: 7px; }
.tz { letter-spacing: .100px; }
.ml { margin-left: 8px; }
.chk { width: 19px; height: 19px; border-radius: 5px; border: 1px solid #42506a; background: #22334a; display: flex; align-items: center; justify-content: center; }
.ck { margin: 3px 0 0 9px; }
.ck2 { margin: 3px 0 0 -4px; }
.self { margin: 4px 0 0 -4px; }
.filt { margin-top: 3px; }
.filt em, .filt .lt { margin-top: 1px; }
.inp { width: 200px; height: 19px; border-radius: 5px; background: #22334a; border: 1px solid #42506a; margin-left: 1px; }
.fi { margin-left: -4px; }
.b4 { width: 57px; height: 19px; }
.lr { margin-left: 8px; } .lt { margin-left: -4px; }
.tblwrap { display: flex; height: 196px; margin-top: 3px; }
.tbl { width: 526px; }
.tr { display: flex; height: 19px; line-height: 21px; }
.th { height: 20px; background: #303033; border-bottom: 1px solid #45454d; }
.tb { height: 176px; overflow: hidden; }
.tb .tr:first-child { margin-top: -12px; }
.tr > span { overflow: hidden; border-right: 1px solid #38383b; padding-left: 4px; display: flex; }
.tr > span:nth-child(1) { width: 136px; padding: 0; }
.tr > span:nth-child(2) { width: 141px; }
.tr > span:nth-child(3) { width: 123px; }
.tr > span:nth-child(4) { width: 64px; }
.tr > span:nth-child(5) { width: 62px; border: 0; }
.th svg { margin: 4px 2px 0 auto; }
.tr .sw { margin: 2px 8px 0 0; }
.pc { margin-left: 8px; }
.sel { background: #29476b; }
.sbar { width: 14px; background: #22221d; padding-top: 131px; }
.sbar i { width: 8px; height: 54px; margin: 0 3px; background: #4e4e4e; border-radius: 4px; }
.find { left: 870px; top: 577px; width: 566px; height: 386px; border-color: #3f4658; }
.find .cap { background: #2a4a7b; border-color: #3f5278; }
.focus { width: 556px; height: 28px; margin: 5px 0 0 -3px; border: 2px solid #3c8cf0; border-radius: 6px; padding: 1px; }
.focus div { height: 22px; background: #22334a; border: 1px solid #4a546a; border-radius: 5px; line-height: 21px; padding-left: 3px; overflow: hidden; letter-spacing: -.180px; }
.f1 { width: 51px; } .f2 { width: 57px; }
.big1 { width: 21px; height: 21px; }
.fr span { margin: 1px 0 0 -4px; } .fr .ic { margin-right: 8px; }
.fwrap { display: flex; height: 295px; margin-top: 3px; }
.fmain { width: 536px; overflow: hidden; }
.hist { display: block; margin-left: 21px; height: 141px; overflow: visible; }
.axis { height: 15px; padding-left: 371px; color: #80807c; }
.axis2 { height: 15px; display: flex; justify-content: space-between; padding: 0 2px 0 21px; }
.mid { display: flex; align-items: center; gap: 4px; margin-left: 25px; margin-right: 39px; }
.fmain hr { margin: 2px 0; }
.fmain hr.tight { margin-top: 1px; }
.sm { width: 15px; height: 15px; border-radius: 4px; margin: -2px -4px 0 0; }
.opt span { letter-spacing: .100px; }
.sorts span { letter-spacing: .160px; }
.radio { width: 14px; height: 14px; border-radius: 50%; background: #22334a; border: 1px solid #35435a; margin: -2px -4px 0 0; }
.radio.on { background: #4296fa; border: 2px solid #22334a; }
.tree svg { margin-left: 8px; margin-top: -2px; }
.fbar { width: 14px; background: #22221d; padding-top: 93px; }
.fbar i { width: 8px; height: 83px; margin: 0 3px; background: #4e4e4e; border-radius: 4px; }
.tip { position: absolute; left: 455px; top: 613px; width: 367px; height: 138px; border: 1px solid #3e3e44; background: rgba(19, 19, 19, .93); padding: 5px 0 0 7px; word-spacing: 0; }
pre { margin: 0; height: 18px; font: 11.670px/18px "Liberation Mono", monospace; }
.cursor { position: absolute; left: 430px; top: 612px; }
</style>
